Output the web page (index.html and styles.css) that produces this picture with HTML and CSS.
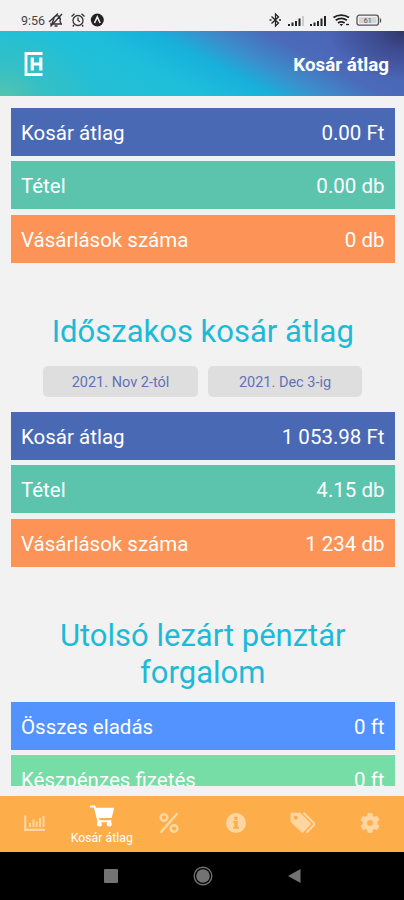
FILE: index.html
```html
<!DOCTYPE html>
<html lang="hu">
<head>
<meta charset="utf-8">
<title>Kosár átlag</title>
<link rel="stylesheet" href="styles.css">
</head>
<body>
<div class="app">
  <div class="status">
    <span class="time">9:56</span>
    <svg class="status-left" width="56" height="16" viewBox="0 0 56 16" fill="none" stroke="#333" stroke-width="1.3">
      <path d="M2 12h12M4 11c2-2 1-6 4-7 3-1 5 2 4 5l1 3M6.500 14h3M2.500 14.500 14 2M1 10 10 1.500"/>
      <circle cx="30" cy="8.500" r="5"/><path d="M30 5.500v3l2 1.200M23.500 4.500l3-2.800M36.500 4.500l-3-2.800M26 13l-1.300 1.500M34 13l1.300 1.500"/>
      <circle cx="49.300" cy="8" r="6.500" fill="#222" stroke="none"/><path d="M46.500 11 49.300 5l2.800 6" stroke="#eee" stroke-width="1.600"/>
    </svg>
    <svg class="status-right" width="114" height="16" viewBox="0 0 114 16" fill="none" stroke="#222" stroke-width="1.300">
      <path d="m3.500 4.500 7 6.500-3 3V2l3 3-7 6.500M1.500 8h2M11 8h2"/>
      <g stroke-width="2"><path d="M21 14v-2M24.500 14v-3.500M28 14V9M31.500 14V6.500"/><path d="M35 14V4" stroke="#ccc"/><path d="M43 14v-2M46.500 14v-3.500M50 14V9M53.500 14V6.500M57 14V4"/></g>
      <path d="M65.500 5.500c4.500-3.300 11-3.300 15.500 0M67.700 8.300c3.500-2.400 7.700-2.400 11.200 0M70 11c2-1.400 4.500-1.400 6.600 0" stroke-width="1.800"/><path d="m71.500 12 1.800 2.200 1.800-2.200z" fill="#222" stroke="none"/><path d="M78 12.500h3"/>
      <rect x="89" y="3.200" width="21.500" height="10" rx="2.500" stroke="#555"/><path d="M112.500 6.500v4" stroke="#555"/><rect x="91" y="5.200" width="17.500" height="6" fill="#d4d4d4" stroke="none"/>
      <text x="99.700" y="10.700" class="battery">61</text>
    </svg>
  </div>
  <header class="header">
    <svg width="20" height="26" viewBox="0 0 20 26" fill="none" stroke="#fff"><path d="M18.500 2.500H2v21h16.500" stroke-width="2.800"/><path d="M8.300 6.500v13M16.800 6.500v13" stroke-width="3.200"/><path d="M9 13h8" stroke-width="3"/></svg>
    <h1>Kosár átlag</h1>
  </header>
  <main class="content">
    <section class="rows">
      <div class="row indigo"><span>Kosár átlag</span><span>0.00 Ft</span></div>
      <div class="row teal"><span>Tétel</span><span>0.00 db</span></div>
      <div class="row orange"><span>Vásárlások száma</span><span>0 db</span></div>
    </section>
    <h2 class="period-title">Időszakos kosár átlag</h2>
    <div class="dates"><button>2021. Nov 2-tól</button><button>2021. Dec 3-ig</button></div>
    <section class="rows">
      <div class="row indigo"><span>Kosár átlag</span><span>1 053.98 Ft</span></div>
      <div class="row teal"><span>Tétel</span><span>4.15 db</span></div>
      <div class="row orange"><span>Vásárlások száma</span><span>1 234 db</span></div>
    </section>
    <h2 class="closing-title">Utolsó lezárt pénztár forgalom</h2>
    <section class="rows">
      <div class="row blue"><span>Összes eladás</span><span>0 ft</span></div>
      <div class="row green"><span>Készpénzes fizetés</span><span>0 ft</span></div>
    </section>
  </main>
  <nav class="tabs">
    <div class="tab"><svg width="22" height="18" viewBox="0 0 22 18" fill="none" stroke="#ffd6a1"><path d="M1.200 1.500v14.300H21" stroke-width="2.200"/><path d="M6 13V9M9.500 13V5.500M12.800 13V7.500M16 13V4M19.500 13V2" stroke-width="2"/></svg></div>
    <div class="tab active"><svg width="25" height="22" viewBox="0 0 25 22" fill="#fff"><path d="M0 .5h5.200l.8 2.300h18.200l-2.500 10.200H9.100l.5 2.200h11.600v2H7.700L3.900 2.500H0z"/><circle cx="9.400" cy="19" r="2.500"/><circle cx="19.300" cy="19" r="2.500"/></svg><span>Kosár átlag</span></div>
    <div class="tab"><svg width="20" height="22" viewBox="0 0 20 22" fill="none" stroke="#ffd6a1" stroke-width="2.500"><circle cx="5" cy="5.500" r="3.300"/><circle cx="15" cy="16.500" r="3.300"/><path d="M18.500 1.200 1.500 20.800"/></svg></div>
    <div class="tab"><svg width="20" height="20" viewBox="0 0 20 20"><circle cx="10" cy="10" r="10" fill="#ffd6a1"/><path d="M8.200 3.700h3.400v3H8.200zM7.300 8h4.400v5.700h1.200v2H7.200v-2h1.200V10H7.300z" fill="#fbae4c"/></svg></div>
    <div class="tab"><svg width="26" height="22" viewBox="0 0 26 22"><path d="M1.800.7h8.500l10 10c.8.8.8 1.600 0 2.400l-6.700 7c-.8.800-1.600.8-2.400 0L.6 9.900V2c0-.8.400-1.300 1.200-1.300zM5.700 3.600a2 2 0 1 0 0 4 2 2 0 0 0 0-4z" fill="#ffd6a1" fill-rule="evenodd"/><path d="M13.500.8 24 11.200c.5.600.5 1 0 1.600l-7.500 8" fill="none" stroke="#ffd6a1" stroke-width="2"/></svg></div>
    <div class="tab"><svg width="20" height="20" viewBox="0 0 20 20"><path d="M8 .3h4l.6 2.900 1.700 1 2.800-1 2 3.500L17 8.900v2.200l2.100 2.200-2 3.500-2.800-1-1.700 1-.6 2.900H8l-.6-2.900-1.700-1-2.800 1-2-3.500L3 11.100V8.900L.9 6.700l2-3.500 2.800 1 1.700-1zM10 6.700a3.300 3.300 0 1 0 0 6.600 3.300 3.300 0 0 0 0-6.600z" fill="#ffd6a1" stroke="#ffd6a1" stroke-width=".7" stroke-linejoin="round" fill-rule="evenodd"/></svg></div>
  </nav>
  <div class="system">
    <svg width="14" height="14"><rect width="14" height="14" rx="1" fill="#737373"/></svg>
    <svg width="20" height="20" viewBox="0 0 20 20"><circle cx="10" cy="10" r="8.800" fill="none" stroke="#707070" stroke-width="1.400"/><circle cx="10" cy="10" r="6.800" fill="#737373"/></svg>
    <svg width="13" height="16" viewBox="0 0 13 16"><path d="M0 8 12.500 1v14z" fill="#737373"/></svg>
  </div>
</div>
</body>
</html>
```
FILE: styles.css
```css
* { box-sizing: border-box; }
body { margin: 0; font-family: Roboto, "Liberation Sans", sans-serif; background: #f2f2f2; }
.app { width: 404px; height: 900px; display: flex; flex-direction: column; overflow: hidden; }
.status { height: 30.500px; padding: 12px 22px 0 21px; display: flex; align-items: flex-start; flex: none; }
.time { font-size: 12.500px; line-height: 17px; width: 27px; color: #444; white-space: nowrap; }
.status-right { margin-left: auto; }
.battery { font-size: 7px; fill: #555; stroke: none; text-anchor: middle; }
.header {
  height: 65px; flex: none; padding: 2px 15px 0 24px;
  display: flex; align-items: center; justify-content: space-between;
  background:
    radial-gradient(ellipse 75px 50px at 100% 0, #2f3768 0%, rgba(56, 66, 130, .7) 40%, rgba(72, 92, 176, 0) 100%),
    radial-gradient(ellipse 95px 65px at 0 100%, #56c3ae 0%, rgba(60, 192, 190, .6) 45%, rgba(32, 188, 212, 0) 100%),
    linear-gradient(28deg, #2dbfcd 0%, #1ebfdb 38%, #18b0da 52%, #3a90cc 61%, #4b6bba 73%, #4b5db0 100%);
}
.header h1 { margin: 0; font-size: 18.800px; font-weight: 700; line-height: 24px; color: #fff; position: relative; top: 1px; }
.content { height: 690.500px; flex: none; padding: 12px 9.500px 0 11px; overflow: hidden; display: flex; flex-direction: column; }
.rows { display: flex; flex-direction: column; gap: 5.500px; flex: none; }
.row { height: 48.200px; padding: 2px 10px 0; display: flex; align-items: center; justify-content: space-between; color: #fff; font-size: 20.500px; line-height: 26px; }
.indigo { background: #4a69b4; }
.teal { background: #5cc3ad; }
.orange { background: #fd9356; }
.blue { background: #5293ff; }
.green { background: #75dda5; }
h2 { margin: 0; font-weight: 400; font-size: 31px; line-height: 36.500px; text-align: center; color: #1dbad8; }
.period-title { margin-top: 51px; }
.dates { display: flex; gap: 10px; justify-content: center; margin: 15.500px 0 15px; }
.dates button { width: 154.500px; height: 30.500px; padding: 2px 0 0; border: 0; border-radius: 5px; background: #dedede; color: #6272b6; font: 14.500px Roboto, sans-serif; }
.closing-title { margin: 51px 30px 10.500px; }
.tabs { height: 56px; flex: none; display: grid; grid-template-columns: repeat(6, 1fr); background: #fdae4b; margin-top: 10px; padding-left: 1px; }
.tab { display: flex; flex-direction: column; align-items: center; justify-content: center; height: 54px; }
.active { gap: 4px; justify-content: flex-start; padding-top: 9px; }
.active svg { margin-left: 1px; }
.tab span { font-size: 12.300px; line-height: 14px; color: #fff; white-space: nowrap; }
.system { flex: 1; background: #000; display: flex; align-items: center; gap: 75px; padding-left: 104px; }
```
